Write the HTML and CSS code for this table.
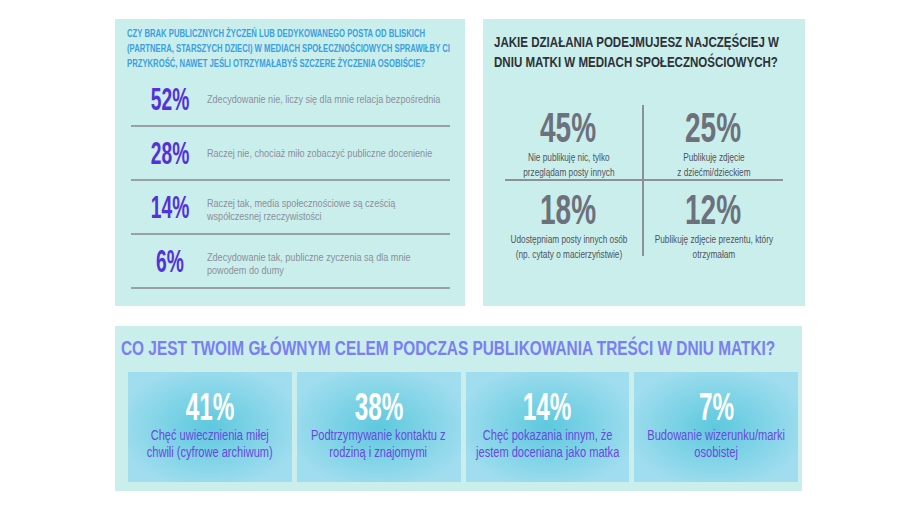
FILE: index.html
```
<!DOCTYPE html>
<html lang="pl">
<head>
<meta charset="utf-8">
<title>Dzień Matki w mediach społecznościowych</title>
<link rel="stylesheet" href="styles.css">
</head>
<body>
<div class="page">
  <div class="top-row">
    <section class="panel panel-q1">
      <h2 class="q1-title">CZY BRAK PUBLICZNYCH ŻYCZEŃ LUB DEDYKOWANEGO POSTA OD BLISKICH<br>(PARTNERA, STARSZYCH DZIECI) W MEDIACH SPOŁECZNOŚCIOWYCH SPRAWIŁBY CI<br>PRZYKROŚĆ, NAWET JEŚLI OTRZYMAŁABYŚ SZCZERE ŻYCZENIA OSOBIŚCIE?</h2>
      <ul class="answers">
        <li class="answer"><span class="ans-pct">52%</span><span class="ans-text">Zdecydowanie nie, liczy się dla mnie relacja bezpośrednia</span></li>
        <li class="answer"><span class="ans-pct">28%</span><span class="ans-text">Raczej nie, chociaż miło zobaczyć publiczne docenienie</span></li>
        <li class="answer"><span class="ans-pct">14%</span><span class="ans-text ans-two">Raczej tak, media społecznościowe są cześcią<br>współczesnej rzeczywistości</span></li>
        <li class="answer"><span class="ans-pct">6%</span><span class="ans-text ans-two">Zdecydowanie tak, publiczne zyczenia są dla mnie<br>powodem do dumy</span></li>
      </ul>
    </section>
    <section class="panel panel-q2">
      <h2 class="q2-title">JAKIE DZIAŁANIA PODEJMUJESZ NAJCZĘŚCIEJ W<br>DNIU MATKI W MEDIACH SPOŁECZNOŚCIOWYCH?</h2>
      <div class="quad">
        <div class="cell cell-tl"><span class="quad-pct">45%</span><span class="quad-text">Nie publikuję nic, tylko<br>przeglądam posty innych</span></div>
        <div class="cell cell-tr"><span class="quad-pct">25%</span><span class="quad-text">Publikuję zdjęcie<br>z dziećmi/dzieckiem</span></div>
        <div class="cell cell-bl"><span class="quad-pct">18%</span><span class="quad-text">Udostępniam posty innych osób<br>(np. cytaty o macierzyństwie)</span></div>
        <div class="cell cell-br"><span class="quad-pct">12%</span><span class="quad-text">Publikuję zdjęcie prezentu, który<br>otrzymałam</span></div>
      </div>
    </section>
  </div>
  <section class="panel panel-q3">
    <h2 class="q3-title">CO JEST TWOIM GŁÓWNYM CELEM PODCZAS PUBLIKOWANIA TREŚCI W DNIU MATKI?</h2>
    <div class="cards">
      <div class="card"><span class="card-pct">41%</span><span class="card-text">Chęć uwiecznienia miłej<br>chwili (cyfrowe archiwum)</span></div>
      <div class="card"><span class="card-pct">38%</span><span class="card-text">Podtrzymywanie kontaktu z<br>rodziną i znajomymi</span></div>
      <div class="card"><span class="card-pct">14%</span><span class="card-text">Chęć pokazania innym, że<br>jestem doceniana jako matka</span></div>
      <div class="card"><span class="card-pct">7%</span><span class="card-text">Budowanie wizerunku/marki<br>osobistej</span></div>
    </div>
  </section>
</div>
</body>
</html>
```
FILE: styles.css
```
* { box-sizing: border-box; }
html, body { margin: 0; padding: 0; background: #ffffff; }
body {
  font-family: "Liberation Sans", Arial, sans-serif;
}
h2 { margin: 0; }
.page {
  padding: 19px 0 0 115px;
}
.top-row {
  display: flex;
  gap: 18px;
}
.panel { background: #c9eeec; }

/* ---- panel 1 ---- */
.panel-q1 {
  width: 350px;
  height: 287px;
  padding: 7px 15px 0 12px;
}
.q1-title {
  color: #3c9fe2;
  font-size: 11px;
  font-weight: bold;
  line-height: 15px;
  white-space: nowrap;
  transform: scaleX(0.70);
  transform-origin: left top;
}
.answers {
  list-style: none;
  margin: 2px 0 0 4px;
  padding: 0;
}
.answer {
  display: flex;
  align-items: center;
  height: 54px;
  border-bottom: 2px solid #98a1a7;
}
.ans-pct {
  flex: 0 0 74px;
  margin-left: 2px;
  text-align: center;
  color: #5531d8;
  font-weight: bold;
  font-size: 31px;
  line-height: 1;
  transform: scaleX(0.62);
  transform-origin: center;
}
.ans-text {
  display: inline-block;
  color: #8e8f9a;
  font-size: 11.5px;
  line-height: 13px;
  white-space: nowrap;
  transform: scaleX(0.79);
  transform-origin: left center;
}
.ans-two { padding-top: 5px; }

/* ---- panel 2 ---- */
.panel-q2 {
  width: 322px;
  height: 287px;
  padding: 13px 0 0 11px;
}
.q2-title {
  color: #2e3237;
  font-size: 15.4px;
  font-weight: bold;
  line-height: 20px;
  white-space: nowrap;
  transform: scaleX(0.75);
  transform-origin: left top;
}
.quad {
  display: grid;
  grid-template-columns: 139px 139px;
  grid-template-rows: 76px 75px;
  margin: 33px 0 0 11px;
}
.cell {
  display: flex;
  flex-direction: column;
  align-items: center;
  justify-content: flex-start;
  text-align: center;
}
.cell-tl, .cell-tr { padding-top: 4px; }
.cell-bl, .cell-br { padding-top: 10px; }
.cell-tl, .cell-bl { padding-right: 10px; }
.cell-tl { border-right: 2px solid #8b9096; border-bottom: 2px solid #8b9096; }
.cell-tr { border-bottom: 2px solid #8b9096; }
.cell-bl { border-right: 2px solid #8b9096; }
.quad-pct {
  color: #6d717b;
  font-weight: bold;
  font-size: 42px;
  line-height: 37px;
  transform: scaleX(0.667);
  transform-origin: center;
}
.quad-text {
  color: #50545b;
  font-size: 11px;
  line-height: 15px;
  margin-top: 4px;
  white-space: nowrap;
  transform: scaleX(0.75);
  transform-origin: center;
}

/* ---- panel 3 ---- */
.panel-q3 {
  margin-top: 20px;
  width: 687px;
  height: 165px;
  padding: 10px 4px 9px 6px;
}
.q3-title {
  color: #7a7ff2;
  font-size: 21px;
  font-weight: bold;
  line-height: 24px;
  white-space: nowrap;
  transform: scaleX(0.733);
  transform-origin: left top;
}
.cards {
  display: grid;
  grid-template-columns: repeat(4, minmax(0, 1fr));
  gap: 5px;
  margin: 12px 0 0 7px;
  height: 110px;
}
.card {
  display: flex;
  flex-direction: column;
  align-items: center;
  justify-content: center;
  text-align: center;
  background: radial-gradient(ellipse at 50% 50%, #5ec8de 0%, #7fd3e6 40%, #a0ddef 80%);
  padding-bottom: 6px;
}
.card-pct {
  color: #ffffff;
  font-weight: bold;
  font-size: 38px;
  line-height: 1;
  transform: scaleX(0.64);
  transform-origin: center;
}
.card-text {
  color: #6a47e0;
  font-size: 14px;
  line-height: 17px;
  margin-top: 1px;
  white-space: nowrap;
  transform: scaleX(0.79);
  transform-origin: center;
}
```
